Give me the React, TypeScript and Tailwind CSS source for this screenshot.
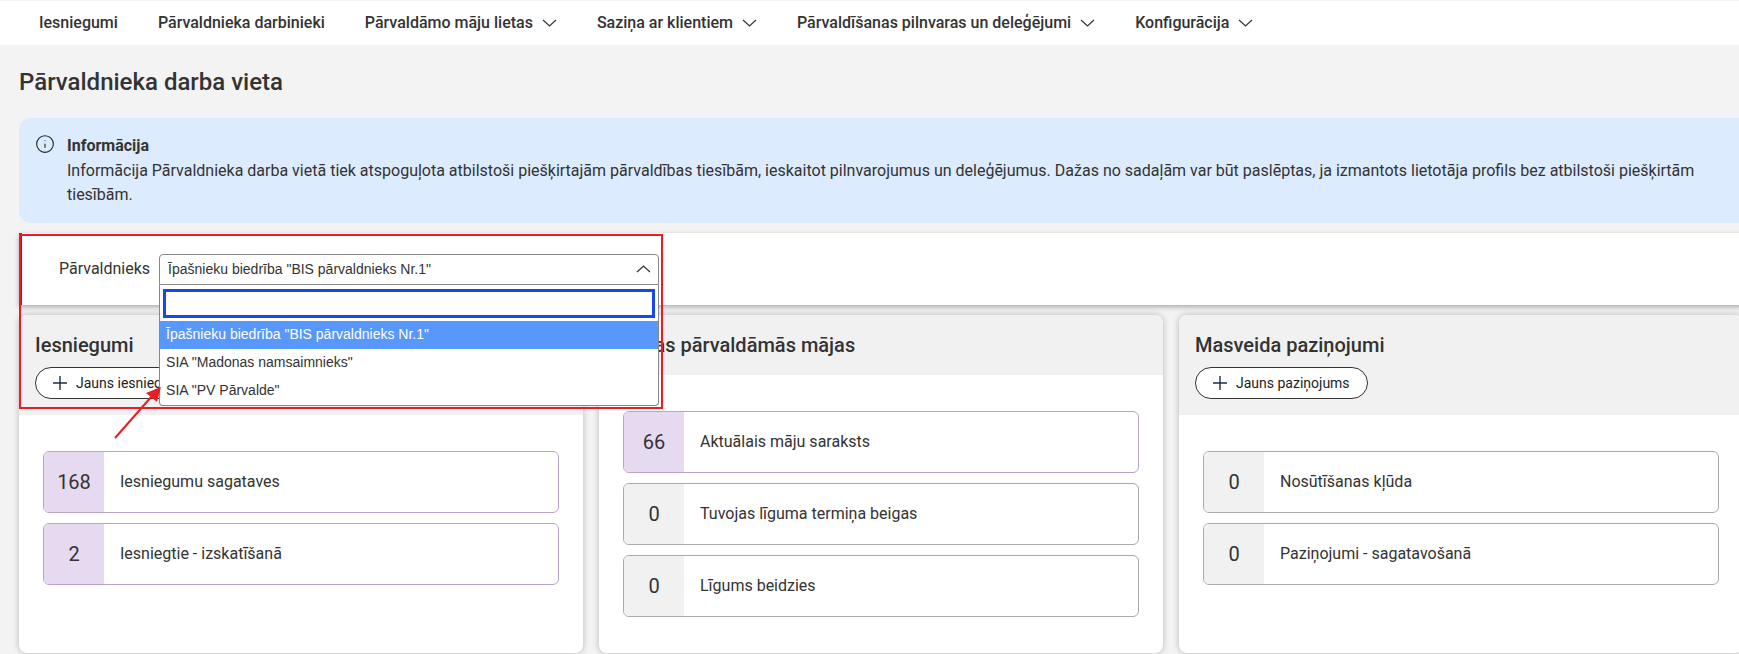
import { Info } from 'lucide-react';

interface StatRow {
  value: number;
  label: string;
}

interface PanelProps {
  title: string;
  action?: string;
  rows: StatRow[];
}

const navItems = [
  { label: 'Iesniegumi' },
  { label: 'Pārvaldnieka darbinieki' },
  { label: 'Pārvaldāmo māju lietas', menu: true },
  { label: 'Saziņa ar klientiem', menu: true },
  { label: 'Pārvaldīšanas pilnvaras un deleģējumi', menu: true },
  { label: 'Konfigurācija', menu: true },
];

const options = ['Īpašnieku biedrība "BIS pārvaldnieks Nr.1"', 'SIA "Madonas namsaimnieks"', 'SIA "PV Pārvalde"'];

function Chevron({ up }: { up?: boolean }) {
  return (
    <svg width="15" height="8" viewBox="0 0 15 8" fill="none" className={up ? 'rotate-180' : ''}>
      <path d="M1 1l6.5 6L14 1" stroke="#333" strokeWidth="1.2" />
    </svg>
  );
}

function PlusIcon() {
  return (
    <svg width="16" height="16" viewBox="0 0 16 16" className="shrink-0">
      <path d="M8 1v14M1 8h14" stroke="#1f2f45" strokeWidth="1.4" />
    </svg>
  );
}

function Panel({ title, action, rows }: PanelProps) {
  return (
    <section className="w-[564px] h-[338px] shrink-0 bg-white rounded-lg overflow-hidden shadow-[0_0_6px_rgba(0,0,0,0.25)]">
      <div className="bg-[#f1f1f1] p-4">
        <h2 className="text-[20px] leading-7 font-medium text-[#333]">{title}</h2>
        {action && (
          <button className="mt-2 h-8 flex items-center gap-[8px] pl-[16px] pr-[17px] border border-[#333] rounded-full bg-white text-[14px] text-[#222]">
            <PlusIcon />
            {action}
          </button>
        )}
      </div>
      <div className="px-6 pt-9 flex flex-col gap-[10px]">
        {rows.map((row) => {
          const active = row.value > 0;
          return (
            <div
              key={row.label}
              className={`h-[62px] flex items-center rounded-md border overflow-hidden ${active ? 'border-[#b8a5cc]' : 'border-[#aaaaaa]'}`}
            >
              <div
                className={`w-[60px] h-full flex items-center justify-center text-[20px] text-[#333] ${active ? 'bg-[#e5daf0]' : 'bg-[#f1f1f1]'}`}
              >
                {row.value}
              </div>
              <span className="ml-4 text-[16px] text-[#333]">{row.label}</span>
            </div>
          );
        })}
      </div>
    </section>
  );
}

export default function App() {
  return (
    <div className="relative w-[1739px] h-[654px] overflow-hidden bg-[#f3f3f3] font-['Roboto',sans-serif] text-[#333]">
      <nav className="mt-px h-[44px] bg-white flex items-center pl-[19px]">
        {navItems.map((item) => (
          <a key={item.label} className="flex items-center gap-[9px] px-5 text-[16px] font-medium text-[#333]">
            {item.label}
            {item.menu && <Chevron />}
          </a>
        ))}
      </nav>

      <main className="pl-[19px] w-[1743px]">
        <h1 className="h-[73px] flex items-center text-[24px] font-medium text-[#333]">Pārvaldnieka darba vieta</h1>

        <div className="h-[105px] flex gap-[12px] pl-[16px] pt-4 rounded-l-xl bg-[#dcebfd] text-[16px] leading-[24.5px]">
          <Info size={20} strokeWidth={1.3} className="shrink-0 text-[#222]" />
          <div className="w-[1640px]">
            <strong className="block font-bold text-[16px]">Informācija</strong>
            <p>
              Informācija Pārvaldnieka darba vietā tiek atspoguļota atbilstoši piešķirtajām pārvaldības tiesībām, ieskaitot
              pilnvarojumus un deleģējumus. Dažas no sadaļām var būt paslēptas, ja izmantots lietotāja profils bez atbilstoši
              piešķirtām tiesībām.
            </p>
          </div>
        </div>

        <div className="relative z-10 mt-[10px] h-[72px] flex items-center gap-[9px] pl-[37px] bg-white border-l-[3px] border-[#444] shadow-[0_2px_5px_rgba(0,0,0,0.3)]">
          <label className="text-[16px] text-[#333]">Pārvaldnieks</label>
          <div className="relative w-[500px] font-['Liberation_Sans',sans-serif] text-[14px] text-[#333]">
            <div className="h-[31px] flex items-center justify-between pl-2 pr-[7px] bg-white border border-[#888] rounded-t-[4px]">
              <span>{options[0]}</span>
              <Chevron up />
            </div>
            <div className="absolute left-0 right-0 top-[31px] bg-white border-x border-b border-[#888] rounded-b-[4px]">
              <div className="px-[3px] pt-[4px] pb-[3px]">
                <input className="block w-full h-[29px] bg-white border-[3px] border-[#1a46ef] outline-none" />
              </div>
              {options.map((option, i) => (
                <div
                  key={option}
                  className={`h-[28px] flex items-center pl-[6px] ${i === 0 ? 'bg-[#5897fb] text-white' : ''}`}
                >
                  {option}
                </div>
              ))}
            </div>
          </div>
        </div>

        <div className="mt-[10px] flex gap-4">
          <Panel
            title="Iesniegumi"
            action="Jauns iesniegums"
            rows={[
              { value: 168, label: 'Iesniegumu sagataves' },
              { value: 2, label: 'Iesniegtie - izskatīšanā' },
            ]}
          />
          <Panel
            title="Manas pārvaldāmās mājas"
            rows={[
              { value: 66, label: 'Aktuālais māju saraksts' },
              { value: 0, label: 'Tuvojas līguma termiņa beigas' },
              { value: 0, label: 'Līgums beidzies' },
            ]}
          />
          <Panel
            title="Masveida paziņojumi"
            action="Jauns paziņojums"
            rows={[
              { value: 0, label: 'Nosūtīšanas kļūda' },
              { value: 0, label: 'Paziņojumi - sagatavošanā' },
            ]}
          />
        </div>
      </main>

      {/* annotation drawn over the screenshot */}
      <div className="absolute z-20 left-[19px] top-[234px] w-[644px] h-[175px] border-2 border-[#ed1c24] pointer-events-none" />
      <svg className="absolute z-30 left-[110px] top-[380px] pointer-events-none" width="60" height="64" viewBox="0 0 60 64">
        <path d="M5 58L42 16" stroke="#ed1c24" strokeWidth="2" />
        <path d="M51 7L36 13L47 22Z" fill="#ed1c24" />
      </svg>
    </div>
  );
}
